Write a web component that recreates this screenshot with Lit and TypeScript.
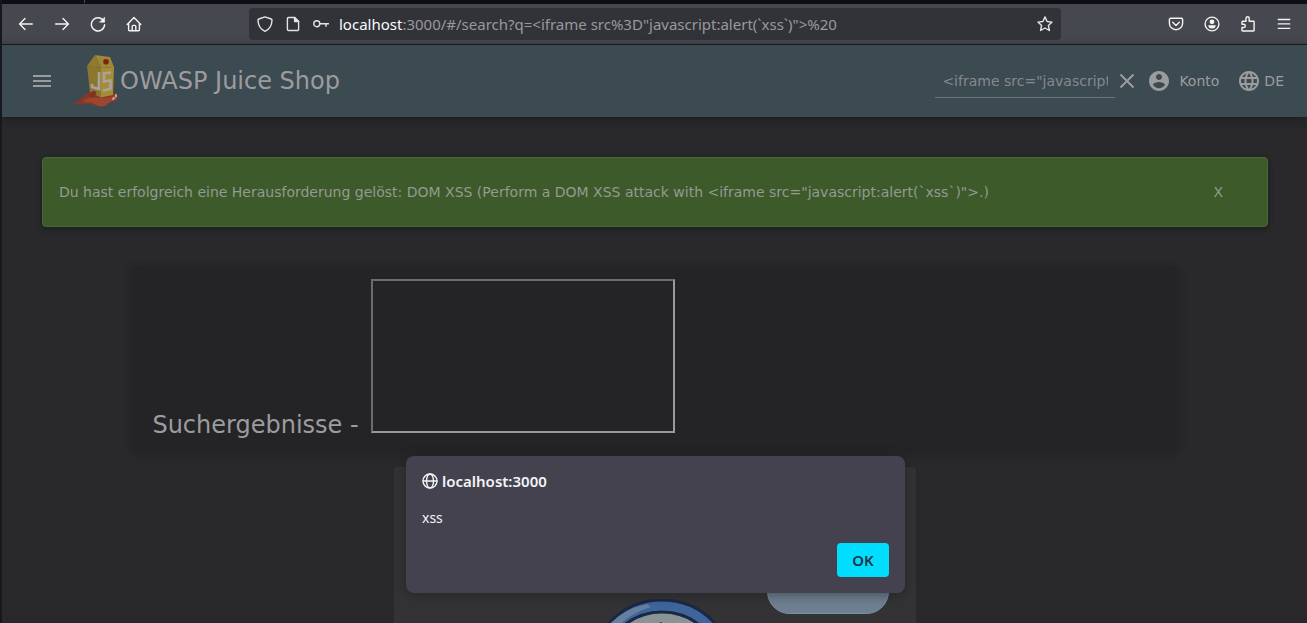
import { LitElement, html, css, svg } from "lit";
import { customElement, property } from "lit/decorators.js";

const stroke = (body: unknown) => html`<svg viewBox="0 0 16 16" width="16" height="16" fill="none"
  stroke="currentColor" stroke-width="1.4" stroke-linecap="round" stroke-linejoin="round" aria-hidden="true">${body}</svg>`;

const icons = {
  back: stroke(svg`<path d="M14.3 8H1.8M7 2.6 1.6 8 7 13.4"/>`),
  forward: stroke(svg`<path d="M1.7 8h12.5M9 2.6 14.4 8 9 13.4"/>`),
  reload: stroke(svg`<path d="M13.8 5.2A6.6 6.6 0 1 0 14.6 8.6"/><path d="M14.6 1.4v4.8H9.8z" fill="currentColor" stroke-width=".6"/>`),
  home: stroke(svg`<path d="M1.2 8.4 8 1.6l6.8 6.8M2.6 7.2v6.6a1 1 0 0 0 1 1h8.8a1 1 0 0 0 1-1V7.2"/><path d="M6.2 14.6v-4.2a1 1 0 0 1 1-1h1.6a1 1 0 0 1 1 1v4.2" />`),
  shield: stroke(svg`<path d="M8 .9 14.2 3c.5.2.8.6.8 1.1-.1 4.900-2 9.100-7 11.200C3 13.200 1.100 9 1 4.100c0-.5.3-.9.8-1.100z"/>`),
  page: stroke(svg`<path d="M9.600 1.500H3.600a1.200 1.200 0 0 0-1.200 1.200v10.600a1.200 1.200 0 0 0 1.200 1.200h8.800a1.200 1.200 0 0 0 1.200-1.200V5.500z"/><path d="M9.600 1.500v4h4z" fill="currentColor"/>`),
  key: stroke(svg`<circle cx="3.800" cy="7.700" r="3"/><path d="M6.900 7.700h8.600M13 7.900v2.300"/>`),
  star: stroke(svg`<path d="M8 .9l2.100 4.600 5 .6-3.700 3.400 1 5L8 12l-4.400 2.500 1-5L.9 6.100l5-.6z"/>`),
  pocket: stroke(svg`<path d="M2.600 2.300h10.800a1.200 1.200 0 0 1 1.200 1.200v3.700a6.600 6.600 0 0 1-13.200 0V3.500a1.200 1.200 0 0 1 1.200-1.200z"/><path d="M4.700 6.300 8 9.400l3.300-3.100"/>`),
  profile: stroke(svg`<circle cx="8" cy="8" r="6.900"/><circle cx="8" cy="5.800" r="2.400" fill="currentColor" stroke="none"/><path d="M4.300 9.300h7.400v.7a2.700 2.700 0 0 1-2.700 2.400H7A2.700 2.700 0 0 1 4.300 10z" fill="currentColor" stroke="none"/>`),
  puzzle: stroke(svg`<path d="M2.600 5.300h3.400V2.400a1.600 1.600 0 0 1 3.200 0v2.900h4.300a.6.6 0 0 1 .6.6v8.500a.6.6 0 0 1-.6.6H2.600a.6.6 0 0 1-.6-.6v-2.900h1.700a1.600 1.600 0 0 0 0-3.200H2V5.900a.6.6 0 0 1 .6-.6z"/>`),
  menu: stroke(svg`<path d="M2.200 3.500h11.600M2.200 7.900h11.600M2.200 12.300h11.600" stroke-width="1.300"/>`),
  globe: stroke(svg`<circle cx="8" cy="8" r="7"/><ellipse cx="8" cy="8" rx="3.500" ry="7"/><path d="M1 8h14"/>`),
};

@customElement("browser-toolbar")
export class BrowserToolbar extends LitElement {
  static styles = css`
    :host { display: block; font-family: "Noto Sans", sans-serif; }
    .tabs { height: 4px; background: #0e0f12; display: flex; padding-left: 82px; }
    .tab-edge { width: 1px; height: 3px; background: #4b4c52; }
    .bar {
      display: flex; align-items: center; height: 40px; padding: 0 5px 0 6px;
      background: #46484f; border-bottom: 1px solid #17181b;
    }
    .group { display: flex; }
    button {
      display: grid; place-items: center; width: 36px; height: 32px; padding: 0;
      border: 0; border-radius: 4px; background: none; color: #f3f3f1;
    }
    .address {
      flex: 1; min-width: 0; display: flex; align-items: center; height: 32px; margin: 0 97px;
      padding: 0 2px; box-sizing: border-box; border-radius: 4px; background: #323338;
    }
    .address button { width: 28px; color: #e4e4e2; }
    .url { flex: 1; min-width: 0; margin-left: 4px; color: #98999c; font-size: 15px; line-height: 20px;
      white-space: nowrap; overflow: hidden; }
    .host { color: #fbfbfe; }
  `;

  render() {
    return html`
      <div class="tabs"><span class="tab-edge"></span></div>
      <nav class="bar" aria-label="Browser">
        <div class="group">
          <button aria-label="Zurück">${icons.back}</button>
          <button aria-label="Vor">${icons.forward}</button>
          <button aria-label="Neu laden">${icons.reload}</button>
          <button aria-label="Startseite">${icons.home}</button>
        </div>
        <div class="address">
          <button aria-label="Schutz">${icons.shield}</button>
          <button aria-label="Seiteninformationen">${icons.page}</button>
          <button aria-label="Passwörter">${icons.key}</button>
          <div class="url" role="textbox" contenteditable="true" spellcheck="false" aria-label="Adresse"><span class="host">localhost</span>:3000/#/search?q=&lt;iframe src%3D"javascript:alert(\`xss\`)"&gt;%20</div>
          <button aria-label="Lesezeichen">${icons.star}</button>
        </div>
        <div class="group">
          <button aria-label="Pocket">${icons.pocket}</button>
          <button aria-label="Profil">${icons.profile}</button>
          <button aria-label="Erweiterungen">${icons.puzzle}</button>
          <button aria-label="Menü">${icons.menu}</button>
        </div>
      </nav>`;
  }
}

@customElement("shop-header")
export class ShopHeader extends LitElement {
  @property() query = "";

  static styles = css`
    :host {
      display: flex; align-items: center; height: 72px; padding: 0 23px 0 28px; box-sizing: border-box;
      background: #3c4a52; color: #9c9c9e; font-family: "DejaVu Sans", sans-serif;
      box-shadow: 0 2px 8px #1e1e20; position: relative;
    }
    button { display: flex; align-items: center; padding: 0; border: 0; background: none; color: inherit; font: inherit; }
    .brand { display: flex; align-items: center; margin-left: 19px; color: inherit; text-decoration: none; }
    .title { font-size: 24px; line-height: 32px; }
    .search {
      width: 180px; height: 33px; margin-left: auto; padding: 0 7px; box-sizing: border-box;
      border: 0; border-bottom: 1px solid #68757c; outline: 0; border-radius: 0;
      background: none; color: #85898c; font: 14px "DejaVu Sans", sans-serif;
    }
    .nav { font-size: 14px; line-height: 20px; }
    .account { gap: 8px; margin-left: 10px; }
    .language { gap: 3px; margin-left: 18px; }
    .clear { margin-left: 2px; }
  `;

  render() {
    return html`
      <button aria-label="Menü öffnen">
        <svg width="24" height="24" viewBox="0 0 24 24" fill="currentColor"><path d="M3 18h18v-2H3v2zm0-5h18v-2H3v2zm0-7v2h18V6H3z"/></svg>
      </button>
      <a class="brand" href="#/">
        <svg width="47" height="56" viewBox="0 0 47 56" aria-hidden="true">
          <path d="M0 51c4-3 8-4 11-8 1-2 3-3 6-3l24 0c4 0 5 3 3 6-2 4-7 2-9 5-4 4-10 3-14 1-7-2-10 0-15-1-3 0-5 1-6 0z" fill="#8a3528"/>
          <path d="M10 48c6-4 9-4 15-3 7 0 13 0 18-4 2 2 1 6-3 7-4 0-4 3-9 5-4 1-8-1-11-3-3-1-6 0-10-2z" fill="#9c4630"/>
          <path d="M14 13 28 15v29.500l-11-5z" fill="#8d752f"/>
          <path d="M28 15l13-1-1 28-12 2.500z" fill="#a58c36"/>
          <path d="M22 2 37 4l4 10-13 1z" fill="#9f8836"/>
          <path d="M22 2 14 13l14 2z" fill="#91792f"/>
          <path d="M26 19v17l-7-2v-3M38 19.500l-7 1v8l6.500-1v8.500l-7.500 1.500" fill="none" stroke="#aaa39c" stroke-width="2.600"/>
          <circle cx="33" cy="8.700" r="2.800" fill="#7d211a"/>
          <path d="M17 43c0-4 2-5 4-5s3 1 2 3-2 1-2 4z" fill="#83301f"/>
          <path d="M40 46l1-1M43 43.500v-1.500" stroke="#b8a8a4" stroke-width="2" stroke-linecap="round"/>
        </svg>
        <span class="title">OWASP Juice Shop</span>
      </a>
      <input class="search" type="text" aria-label="Suche" .value=${this.query} />
      <button class="clear" aria-label="Suche schließen">
        <svg width="20" height="20" viewBox="0 0 20 20" fill="none" stroke="currentColor" stroke-width="2"><path d="M3.500 3.500l13 13M16.500 3.500l-13 13"/></svg>
      </button>
      <button class="nav account">
        <svg width="24" height="24" viewBox="0 0 24 24" fill="currentColor" aria-hidden="true"><path d="M12 2C6.480 2 2 6.480 2 12s4.480 10 10 10 10-4.480 10-10S17.520 2 12 2zm0 3c1.660 0 3 1.340 3 3s-1.340 3-3 3-3-1.340-3-3 1.340-3 3-3zm0 14.200c-2.500 0-4.710-1.280-6-3.220.030-1.990 4-3.080 6-3.080 1.990 0 5.970 1.090 6 3.080-1.290 1.940-3.500 3.220-6 3.220z"/></svg>
        <span>Konto</span>
      </button>
      <button class="nav language">
        <svg width="24" height="24" viewBox="0 0 24 24" fill="currentColor" aria-hidden="true"><path d="M11.990 2C6.470 2 2 6.480 2 12s4.470 10 9.990 10C17.520 22 22 17.520 22 12S17.520 2 11.990 2zm6.930 6h-2.950c-.320-1.250-.780-2.450-1.380-3.560 1.840.630 3.370 1.910 4.330 3.560zM12 4.040c.830 1.200 1.480 2.530 1.910 3.960h-3.820c.430-1.430 1.080-2.760 1.910-3.960zM4.260 14C4.100 13.360 4 12.690 4 12s.100-1.360.260-2h3.380c-.080.660-.140 1.320-.140 2s.060 1.340.140 2H4.260zm.820 2h2.950c.320 1.250.780 2.450 1.380 3.560-1.840-.630-3.370-1.900-4.330-3.560zm2.950-8H5.080c.960-1.660 2.490-2.930 4.330-3.560C8.810 5.550 8.350 6.750 8.030 8zM12 19.960c-.830-1.200-1.480-2.530-1.910-3.960h3.820c-.430 1.430-1.080 2.760-1.910 3.960zM14.340 14H9.660c-.090-.660-.160-1.320-.160-2s.070-1.350.160-2h4.680c.090.650.160 1.320.160 2s-.070 1.340-.160 2zm.250 5.560c.600-1.110 1.060-2.310 1.380-3.560h2.950c-.960 1.650-2.490 2.930-4.330 3.560zM16.360 14c.080-.660.140-1.320.140-2s-.060-1.340-.140-2h3.380c.160.640.260 1.310.260 2s-.100 1.360-.260 2h-3.380z"/></svg>
        <span>DE</span>
      </button>`;
  }
}

@customElement("script-dialog")
export class ScriptDialog extends LitElement {
  @property() origin = "";
  @property() message = "";

  static styles = css`
    :host { position: absolute; top: 456px; left: 2px; right: 0; display: flex; justify-content: center; pointer-events: none; }
    .box {
      position: static; display: flex; flex-direction: column; width: 499px; margin: 0; padding: 16px; box-sizing: border-box;
      border: 0; border-radius: 8px; background: #44424e; color: #f4f4f6; pointer-events: auto;
      font: 14px/18px "Noto Sans", sans-serif; box-shadow: 0 2px 12px #1c1c1e80;
    }
    .origin { display: flex; align-items: center; gap: 4px; margin: 0 0 19px; font-size: 15px; line-height: 18px; font-weight: 600; }
    .message { margin: 0 0 16px; font-size: 14px; line-height: 18px; }
    .ok {
      align-self: flex-end; width: 52px; height: 34px; padding: 0; border: 0; border-radius: 4px;
      background: #00ddff; color: #23343e; font: 600 15px/18px "Noto Sans", sans-serif;
    }
  `;

  render() {
    return html`
      <dialog class="box" open aria-labelledby="origin">
        <h2 class="origin" id="origin">${icons.globe}<span>${this.origin}</span></h2>
        <p class="message">${this.message}</p>
        <button class="ok">OK</button>
      </dialog>`;
  }
}

@customElement("app-root")
export class AppRoot extends LitElement {
  static styles = css`
    :host {
      display: flex; flex-direction: column; position: relative; height: 100vh; box-sizing: border-box;
      overflow: hidden; border-left: 2px solid #17171d; background: #29292b; color: #9c9c9e;
      font-family: "DejaVu Sans", sans-serif;
    }
    main { flex: 1; min-height: 0; overflow: hidden; display: flex; flex-direction: column; align-items: center; padding: 40px 0 0 1px; }
    .solved {
      display: flex; align-items: center; justify-content: space-between; align-self: stretch; flex: none;
      min-height: 70px; margin: 0 39px; padding: 0 40px 0 16px; box-sizing: border-box;
      border: 1px solid #48683a; border-radius: 4px; background: #3d5a2b; color: #949a90;
      box-shadow: 0 2px 5px #1c1c1e; font-size: 14px; line-height: 20px;
    }
    .close { padding: 0 4px; border: 0; background: none; color: inherit; font: inherit; }
    .results {
      flex: none; width: 80%; margin-top: 40px; padding: 12px 19px; box-sizing: border-box;
      background: #242426; box-shadow: 0 2px 10px #222224; border-radius: 2px;
    }
    .heading { display: flex; align-items: flex-end; gap: 12px; font-size: 24px; line-height: 16px; font-weight: 400; margin: 0 0 5px; }
    .frame { width: 304px; height: 154px; box-sizing: border-box; border: 2px solid; border-color: #6c6c6e #9a9a9c #9a9a9c #6c6c6e; }
    .product {
      flex: none; display: flex; width: 40%; height: 320px; margin-top: 17px; padding: 102px 27px 0 211px;
      box-sizing: border-box; border-radius: 4px; background: #333335; justify-content: space-between; align-items: flex-start;
    }
    .seal { flex: none; margin-top: 30px; }
    .pill { flex: none; width: 122px; height: 45px; border: 1px solid #7c8fa3; border-radius: 23px; box-sizing: border-box; background: #6f8092; }
  `;

  render() {
    return html`
      <browser-toolbar></browser-toolbar>
      <shop-header query='&lt;iframe src="javascript:alert(\`xss\`)"&gt;'></shop-header>
      <main>
        <div class="solved" role="status">
          <span>Du hast erfolgreich eine Herausforderung gelöst: DOM XSS (Perform a DOM XSS attack with &lt;iframe src="javascript:alert(\`xss\`)"&gt;.)</span>
          <button class="close" aria-label="X">X</button>
        </div>
        <section class="results">
          <h1 class="heading"><span>Suchergebnisse -</span><span class="frame"></span></h1>
        </section>
        <section class="product">
          <svg class="seal" width="114" height="146" viewBox="16 0 114 146" aria-hidden="true">
            <circle cx="73" cy="73" r="72" fill="#3f659d" stroke="#192944" stroke-width="3"/>
            <path d="M18 28A71 71 0 0 1 58 5l4 3A74 74 0 0 0 25 32z" fill="#667f9f"/>
            <circle cx="73" cy="73" r="60" fill="#899497" stroke="#192944" stroke-width="3"/>
            <path d="M66 25l7-2v3z" fill="#25344e"/>
          </svg>
          <span class="pill"></span>
        </section>
      </main>
      <script-dialog origin="localhost:3000" message="xss"></script-dialog>`;
  }
}
